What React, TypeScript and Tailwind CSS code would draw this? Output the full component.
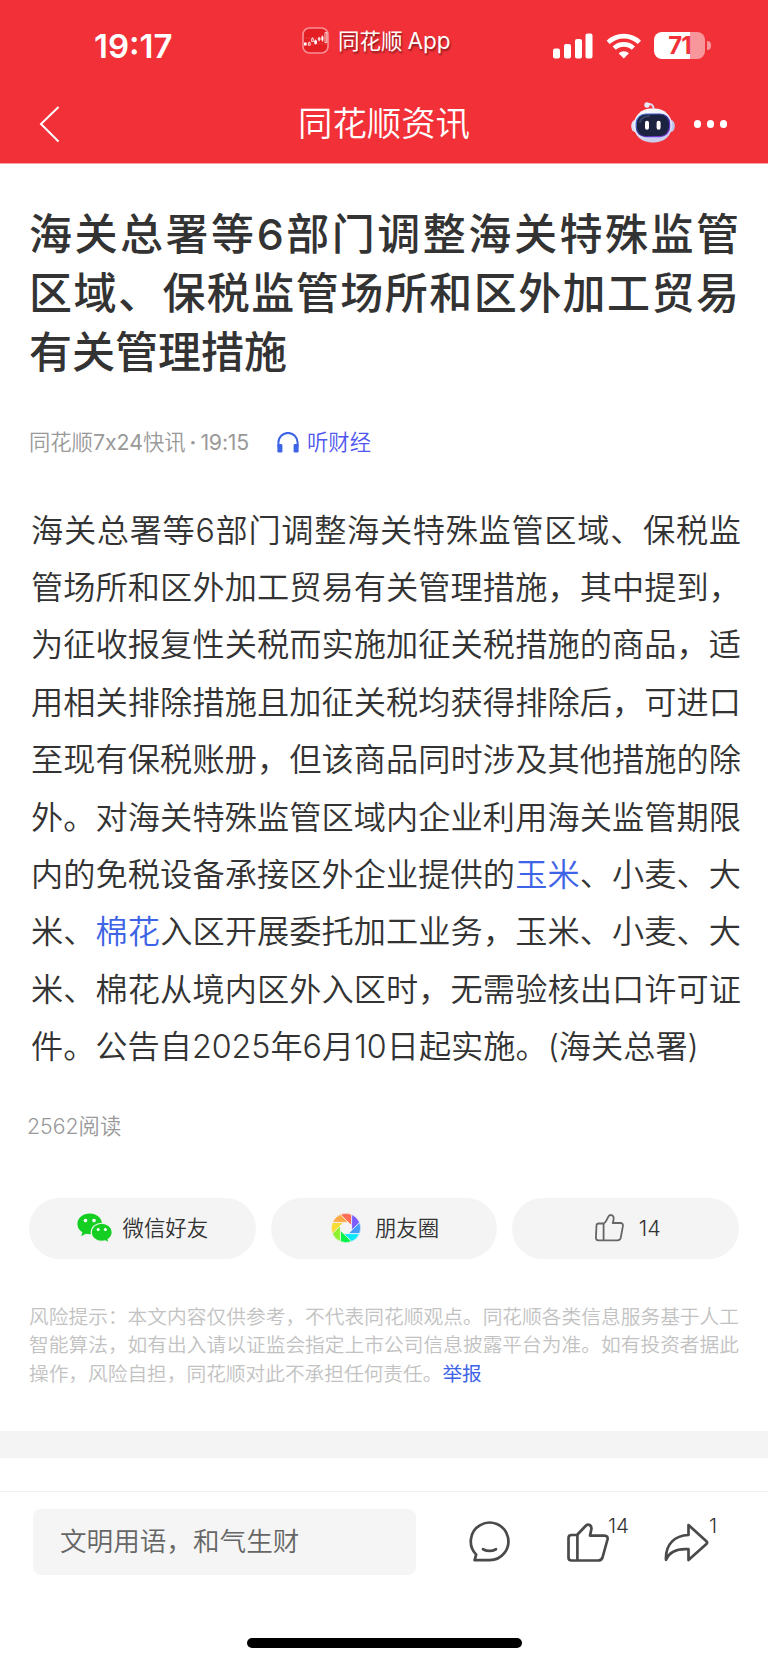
import type { ReactNode } from "react";

const cjk = "font-['Inter','Noto_Sans_CJK_SC',sans-serif]";

const titleLines = [
    "海关总署等6部门调整海关特殊监管",
    "区域、保税监管场所和区外加工贸易",
    "有关管理措施",
];

const bodyLines: ReactNode[] = [
    "海关总署等6部门调整海关特殊监管区域、保税监",
    "管场所和区外加工贸易有关管理措施，其中提到，",
    "为征收报复性关税而实施加征关税措施的商品，适",
    "用相关排除措施且加征关税均获得排除后，可进口",
    "至现有保税账册，但该商品同时涉及其他措施的除",
    "外。对海关特殊监管区域内企业利用海关监管期限",
    <>内的免税设备承接区外企业提供的<Stock>玉米</Stock>、小麦、大</>,
    <>米、<Stock>棉花</Stock>入区开展委托加工业务，玉米、小麦、大</>,
    "米、棉花从境内区外入区时，无需验核出口许可证",
    "件。公告自2025年6月10日起实施。(海关总署)",
];

const riskLines: ReactNode[] = [
    "风险提示：本文内容仅供参考，不代表同花顺观点。同花顺各类信息服务基于人工",
    "智能算法，如有出入请以证监会指定上市公司信息披露平台为准。如有投资者据此",
    <>操作，风险自担，同花顺对此不承担任何责任。<span className="font-normal text-[#3d63e6]">举报</span></>,
];

function Stock({ children }: { children: ReactNode }) {
    return <span className="text-[#3d63e6]">{children}</span>;
}

// every line but the last is stretched to the full column
function Lines({ lines }: { lines: ReactNode[] }) {
    return (
        <>
            {lines.map((line, i) => (
                <span
                    key={i}
                    className={`block whitespace-nowrap [text-spacing-trim:space-all] ${i < lines.length - 1 ? "[text-align-last:justify]" : ""}`}
                >
                    {line}
                </span>
            ))}
        </>
    );
}

function AppLogo() {
    return (
        <svg width="27" height="27" viewBox="0 0 27 27" fill="none">
            <rect x="1" y="1" width="25" height="25" rx="6.5" fill="#e31f24" stroke="#f79095" strokeWidth="1.6" />
            <path d="M1 17h25M2 11h23" stroke="#f0484c" strokeWidth="0.5" />
            <path d="M2 15.5h2.6v3H2zM12.2 13.5h2.8v3.2h-2.8zM19.4 9.6h2v4h-2z" fill="#fff" />
            <path d="M6.4 15.7h1.8v2.6H6.4zM9.6 11.7h1.8v2.8H9.6zM16.4 11h1.6v2h-1.6zM23 5.6h1.8v10H23z" stroke="#fff" strokeWidth="0.8" />
            <path d="M7.3 14.6v1M10.5 10.4v1.2M13.6 12.4v5.2M17.2 9.8v4.6M20.4 8.4v6.4" stroke="#fff" strokeWidth="0.7" />
        </svg>
    );
}

function Signal() {
    return (
        <svg width="40" height="26" viewBox="0 0 40 26" fill="#fff">
            <rect x="0" y="15.5" width="7" height="10" rx="2" />
            <rect x="11" y="11" width="7" height="14.5" rx="2" />
            <rect x="22" y="6" width="7" height="19.5" rx="2" />
            <rect x="32.5" y="0.5" width="7" height="25" rx="2" />
        </svg>
    );
}

function Wifi() {
    return (
        <svg width="36" height="26" viewBox="0 0 36 26" fill="none" stroke="#fff" strokeWidth="4.6">
            <path d="M2.2 9.4a22.6 22.6 0 0 1 31.2 0" />
            <path d="M8.2 15.2a14 14 0 0 1 19.2 0" />
            <path d="M17.8 25.4l-5.2-5.2a7.6 7.6 0 0 1 10.4 0z" fill="#fff" stroke="none" />
        </svg>
    );
}

function Battery() {
    return (
        <div className="flex items-center gap-[1.5px]">
            <div className="flex h-[27px] w-[51px] items-center justify-center rounded-[8px] bg-[linear-gradient(90deg,#fff_36px,#f8979b_36px)]">
                <span className="text-[24px] font-bold leading-[27px] tracking-[-1px] text-[#f23038]">71</span>
            </div>
            <div className="h-[9px] w-[4px] rounded-r-full bg-[#f8979b]" />
        </div>
    );
}

function Robot() {
    return (
        <svg width="44" height="42" viewBox="0 0 44 42" fill="none">
            <defs>
                <linearGradient id="shell" x1="0" y1="0" x2="0.3" y2="1">
                    <stop offset="0" stopColor="#ffffff" />
                    <stop offset="0.6" stopColor="#e6e8f8" />
                    <stop offset="1" stopColor="#c9cdec" />
                </linearGradient>
                <linearGradient id="rim" x1="0" y1="0" x2="1" y2="1">
                    <stop offset="0" stopColor="#4b8ce0" />
                    <stop offset="0.5" stopColor="#3f2fa8" />
                    <stop offset="1" stopColor="#8a3df0" />
                </linearGradient>
            </defs>
            <path d="M16 3.6c4-1.4 6.4.4 6.6 4" stroke="#d9dcf2" strokeWidth="2" />
            <circle cx="16" cy="4" r="2.7" fill="#e9ebfa" />
            <ellipse cx="4" cy="25" rx="3.8" ry="6" fill="#dde0f5" />
            <ellipse cx="40" cy="25" rx="3.8" ry="6" fill="#bfc4ea" />
            <rect x="2.6" y="7.4" width="38.6" height="34" rx="17.5" fill="url(#shell)" />
            <rect x="5.2" y="13" width="33.4" height="22.6" rx="9.5" fill="#1c2340" stroke="url(#rim)" strokeWidth="1.2" />
            <path d="M9 21c1-4.5 5-5.6 9-5.9" stroke="#39446a" strokeWidth="2" strokeLinecap="round" />
            <rect x="14" y="19.8" width="4" height="9" rx="2" fill="#fff" />
            <rect x="25.6" y="19.8" width="4" height="9" rx="2" fill="#fff" />
        </svg>
    );
}

function Headphones() {
    return (
        <svg width="22" height="21" viewBox="0 0 22 21" fill="none">
            <path d="M1.4 15v-4.5a9.6 9.6 0 0 1 19.2 0V15" stroke="#3d63e6" strokeWidth="2" />
            <rect x="0.4" y="12" width="5" height="8.6" rx="1.4" fill="#3d63e6" />
            <rect x="16.6" y="12" width="5" height="8.6" rx="1.4" fill="#3d63e6" />
        </svg>
    );
}

function Wechat() {
    return (
        <svg width="36" height="30" viewBox="0 0 36 30">
            <path d="M12.7.6C5.9.6.4 5 .4 10.9c0 3.6 1.9 6.4 5 8.3l-1.2 4 4.7-2.4c1.2.3 2.5.5 3.8.5 6.8 0 12.3-4.5 12.3-10.4S19.5.6 12.7.6z" fill="#14cf22" />
            <path d="M24.7 10.2c-5.8 0-10.5 4-10.5 9.1s4.7 9.1 10.5 9.1c1.3 0 2.5-.2 3.6-.5l3.8 1.9-1-3.3c2.5-1.7 4.1-4.3 4.1-7.2 0-5.1-4.7-9.1-10.5-9.1z" fill="#14cf22" stroke="#f4f4f4" strokeWidth="1.1" />
            <g fill="#fff">
                <circle cx="8.5" cy="7.6" r="1.8" />
                <circle cx="17" cy="7.6" r="1.8" />
                <circle cx="21.2" cy="16.4" r="1.5" />
                <circle cx="28.4" cy="16.4" r="1.5" />
            </g>
        </svg>
    );
}

const blades = ["#ff6b55", "#7a5cff", "#449cff", "#0ce8fb", "#05f24a", "#8df22c", "#f7dc35", "#ffab45"];

function Moments() {
    return (
        <svg width="30" height="30" viewBox="-15 -15 30 30">
            {blades.map((color, i) => (
                <path
                    key={color}
                    d="M-5.6 -13.6A14.7 14.7 0 0 1 5.6 -13.6V-2.3L-5.6 -13.6z"
                    fill={color}
                    stroke="#f4f4f4"
                    strokeWidth="0.7"
                    transform={`rotate(${i * 45})`}
                />
            ))}
            <path d="M-2.3-5.6H2.3L5.6-2.3V2.3L2.3 5.6H-2.3L-5.6 2.3V-2.3z" fill="#f4f4f4" />
        </svg>
    );
}

function ThumbSmall() {
    return (
        <svg width="29" height="28" viewBox="0 0 29 28" fill="none" stroke="#666" strokeWidth="1.8" strokeLinejoin="round">
            <path d="M8.6 9.5H3.8Q1.6 9.5 1.5 11.5L.9 23.6Q.9 26.4 3.4 26.4H22.5Q25 26.4 25.7 24L27.9 12.2Q28.2 9 25.4 9H17.7C18.5 6.8 18.9 4.8 18.5 3 17.9.7 14.8.3 13.5 2.4L11.3 6.7Q10.2 8.8 8.6 9.5z" />
            <path d="M8.6 9.5V26.4" />
        </svg>
    );
}

function Chat() {
    return (
        <svg width="41" height="41" viewBox="0 0 41 41" fill="none" stroke="#4a4a4a" strokeWidth="2.7" strokeLinejoin="round" strokeLinecap="round">
            <path d="M20.5 39.2A18.8 18.8 0 1 0 7.2 33.6L5.6 39.2z" />
            <path d="M14 28.2q6.5 3.4 13 0" />
        </svg>
    );
}

function Thumb() {
    return (
        <svg width="42" height="39" viewBox="0 0 42 39" fill="none" stroke="#4a4a4a" strokeWidth="2.7" strokeLinejoin="round">
            <path d="M10 12H4.5Q1.5 12 1.5 15V34.5Q1.5 37.5 4.5 37.5H31Q34.5 37.5 35.5 34.5L40.5 16.5Q41.2 12.6 37.5 12.6H23L24.3 6.5Q25 3.5 22.6 2 20.6 1 18.8 2.7L10 12z" />
            <path d="M10.4 12V37.5" />
        </svg>
    );
}

function Share() {
    return (
        <svg width="45" height="39" viewBox="0 0 45 39" fill="none" stroke="#4a4a4a" strokeWidth="2.7" strokeLinejoin="round">
            <path d="M24.5 2L42.4 18.2Q43.8 19.6 42.4 21L24.5 37V26.2C14 25.5 5.5 28 2 36.8 1.2 21 11 12.4 24.5 12z" />
        </svg>
    );
}

function ShareButton({ icon, label, gap }: { icon: ReactNode; label: string; gap: string }) {
    return (
        <button className={`flex h-[61px] items-center justify-center rounded-full bg-[#f4f4f4] text-[21.4px] font-[350] text-[#333] ${gap}`}>
            {icon}
            <span>{label}</span>
        </button>
    );
}

export default function App() {
    return (
        <div className={`flex h-[1662px] w-[768px] flex-col overflow-hidden bg-white font-[350] ${cjk}`}>
            <header className="h-[164px] shrink-0 border-b border-[#f9a3a6] bg-[#f23038] text-white">
                {/* status bar */}
                <div className="flex h-[85px] pl-[94px]">
                    <div className="w-[208px] pt-[26px] text-[33px] font-semibold leading-[40px]">19:17</div>
                    <div className="flex w-[251px] items-start gap-[9px] pt-[27px]">
                        <AppLogo />
                        <span className="text-[21.5px] font-normal leading-[28px] [text-shadow:1px_2px_2px_rgba(0,0,0,0.45)]">同花顺<span className="pl-[5px] text-[22.5px]">App</span></span>
                    </div>
                    <div className="mt-[32px] flex h-[27px] items-center gap-[12.5px]">
                        <Signal />
                        <Wifi />
                        <Battery />
                    </div>
                </div>

                {/* nav bar */}
                <div className="grid h-[78px] grid-cols-[1fr_auto_1fr] items-center">
                    <svg className="ml-[38px]" width="22" height="38" viewBox="0 0 22 38" fill="none" stroke="#fff" strokeWidth="2">
                        <path d="M20.5 2L3 19 20.5 36.5" />
                    </svg>
                    <h1 className="text-[34.4px] font-[350] leading-[40px]">同花顺资讯</h1>
                    <div className="flex items-center justify-end gap-[19px] pr-[41px]">
                        <div className="-mt-[4px]"><Robot /></div>
                        <div className="flex gap-[5.5px]">
                            <i className="size-[7.3px] rounded-full bg-white" />
                            <i className="size-[7.3px] rounded-full bg-white" />
                            <i className="size-[7.3px] rounded-full bg-white" />
                        </div>
                    </div>
                </div>
            </header>

            <main className="flex flex-1 flex-col px-[29px]">
                <h2 className="mt-[41px] text-[43px] font-medium leading-[59.2px] text-[#333]">
                    <Lines lines={titleLines} />
                </h2>

                <div className="mt-[45px] flex h-[30px] items-center text-[21.3px] text-[#999]">
                    <span>同花顺<span className="font-normal">7x24</span>快讯<span className="px-[4px] font-semibold">·</span><span className="font-normal tracking-[-0.2px]">19:15</span></span>
                    <span className="ml-[28px] flex items-center gap-[8px] text-[#5057ee]">
                        <Headphones />
                        听财经
                    </span>
                </div>

                <p className="-mr-[2px] mt-[44px] pl-[2px] text-[32.2px] leading-[57.4px] text-[#333]">
                    <Lines lines={bodyLines} />
                </p>

                <div className="-ml-[2px] mt-[35px] text-[21.3px] leading-[30px] text-[#999]">2562阅读</div>

                <div className="mt-[57px] grid grid-cols-3 gap-[15px]">
                    <ShareButton icon={<Wechat />} label="微信好友" gap="gap-[10px]" />
                    <ShareButton icon={<Moments />} label="朋友圈" gap="gap-[14px] pl-[2px]" />
                    <ShareButton icon={<ThumbSmall />} label="14" gap="gap-[15px] pl-[4px]" />
                </div>

                <p className="mt-[44px] text-[19.7px] leading-[28.7px] text-[#c2c2c2]">
                    <Lines lines={riskLines} />
                </p>
            </main>

            <div className="h-[27px] shrink-0 bg-[#f4f4f4]" />

            <footer className="mt-[33px] flex h-[171px] shrink-0 flex-col border-t border-[#f0f0f0]">
                <div className="mt-[17px] flex items-start pl-[33px]">
                    <div className="flex h-[66px] w-[383px] items-center rounded-[8px] bg-[#f5f5f5] pl-[27px] text-[26.6px] text-[#666]">文明用语，和气生财</div>
                    <div className="ml-[53px] mt-[12px]"><Chat /></div>
                    <div className="ml-[57px] mt-[14px] flex w-[97px] text-[20.5px] text-[#333]">
                        <Thumb />
                        <span className="-ml-[1px] -mt-[7px] leading-[20px]">14</span>
                    </div>
                    <div className="mt-[14px] flex text-[20.5px] text-[#333]">
                        <Share />
                        <span className="-mt-[7px] leading-[20px]">1</span>
                    </div>
                </div>
                <div className="mx-auto mt-[63px] h-[10px] w-[275px] rounded-full bg-black" />
            </footer>
        </div>
    );
}
